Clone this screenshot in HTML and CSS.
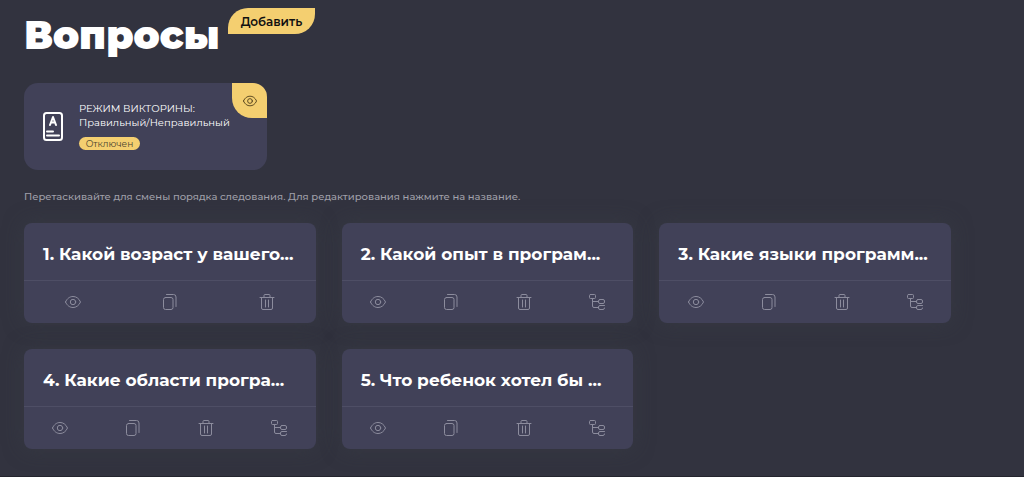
FILE: index.html
```html
<!DOCTYPE html>
<html lang="ru">
<head>
    <meta charset="UTF-8">
    <meta name="viewport" content="width=device-width, initial-scale=1.0">
    <title>Вопросы</title>
    <link rel="stylesheet" href="styles.css">
</head>
<body>
    <svg class="sprite" aria-hidden="true">
        <symbol id="eye" viewBox="0 0 16 16">
            <path d="M.5 8C2.2 4.200 4.900 2.500 8 2.500s5.800 1.700 7.500 5.500c-1.700 3.800-4.400 5.500-7.500 5.500S2.200 11.800.5 8z"/>
            <circle cx="8" cy="8" r="2.700"/>
        </symbol>
        <symbol id="copy" viewBox="0 0 16 16">
            <rect x="1.500" y="3.500" width="9.500" height="12" rx="2"/>
            <path d="M4.500.5h7a2.500 2.500 0 0 1 2.500 2.500v9.500"/>
        </symbol>
        <symbol id="trash" viewBox="0 0 16 16">
            <path d="M1 3.500h14M5 3.500v-2a1 1 0 0 1 1-1h4a1 1 0 0 1 1 1v2M2.500 3.500v10.500a1.500 1.500 0 0 0 1.500 1.500h8a1.500 1.500 0 0 0 1.500-1.500V3.500M6.500 6v7M9.500 6v7"/>
        </symbol>
        <symbol id="tree" viewBox="0 0 16 16">
            <rect x=".5" y=".5" width="6" height="4" rx="1"/>
            <rect x="9.500" y="5.500" width="6" height="4" rx="1.500"/>
            <path d="M3.500 4.500v7.500a1.500 1.500 0 0 0 1.500 1.500h4.500M3.500 7.500h6M15.500 11.500h-4.500a1.500 1.500 0 0 0-1.500 1.500v1a1.500 1.500 0 0 0 1.500 1.500h3a1.500 1.500 0 0 0 1.500-1.500"/>
        </symbol>
    </svg>

    <main class="page">
        <header class="header">
            <h1>Вопросы</h1>
            <button class="add" type="button">Добавить</button>
        </header>

        <section class="mode">
            <svg class="mode-icon" viewBox="0 0 20 29" aria-hidden="true">
                <rect x="1" y="1" width="18" height="27" rx="2.500"/>
                <path d="M7 13l3-8 3 8M8 10.500h4M4 19.500h6M4 23.500h12"/>
            </svg>
            <div class="mode-text">
                <p>РЕЖИМ ВИКТОРИНЫ:<br>Правильный/Неправильный</p>
                <span class="status">Отключен</span>
            </div>
            <button class="mode-toggle" type="button" aria-label="Включить режим"><svg><use href="#eye"/></svg></button>
        </section>

        <p class="hint">Перетаскивайте для смены порядка следования. Для редактирования нажмите на название.</p>

        <div class="questions">
            <article class="card">
                <h2><a href="#q1">1. Какой возраст у вашего...</a></h2>
                <div class="actions">
                    <button type="button" aria-label="Показать"><svg><use href="#eye"/></svg></button>
                    <button type="button" aria-label="Копировать"><svg><use href="#copy"/></svg></button>
                    <button type="button" aria-label="Удалить"><svg><use href="#trash"/></svg></button>
                </div>
            </article>
            <article class="card">
                <h2><a href="#q2">2. Какой опыт в програм...</a></h2>
                <div class="actions">
                    <button type="button" aria-label="Показать"><svg><use href="#eye"/></svg></button>
                    <button type="button" aria-label="Копировать"><svg><use href="#copy"/></svg></button>
                    <button type="button" aria-label="Удалить"><svg><use href="#trash"/></svg></button>
                    <button type="button" aria-label="Ветвление"><svg><use href="#tree"/></svg></button>
                </div>
            </article>
            <article class="card">
                <h2><a href="#q3">3. Какие языки программ...</a></h2>
                <div class="actions">
                    <button type="button" aria-label="Показать"><svg><use href="#eye"/></svg></button>
                    <button type="button" aria-label="Копировать"><svg><use href="#copy"/></svg></button>
                    <button type="button" aria-label="Удалить"><svg><use href="#trash"/></svg></button>
                    <button type="button" aria-label="Ветвление"><svg><use href="#tree"/></svg></button>
                </div>
            </article>
            <article class="card">
                <h2><a href="#q4">4. Какие области програ...</a></h2>
                <div class="actions">
                    <button type="button" aria-label="Показать"><svg><use href="#eye"/></svg></button>
                    <button type="button" aria-label="Копировать"><svg><use href="#copy"/></svg></button>
                    <button type="button" aria-label="Удалить"><svg><use href="#trash"/></svg></button>
                    <button type="button" aria-label="Ветвление"><svg><use href="#tree"/></svg></button>
                </div>
            </article>
            <article class="card">
                <h2><a href="#q5">5. Что ребенок хотел бы ...</a></h2>
                <div class="actions">
                    <button type="button" aria-label="Показать"><svg><use href="#eye"/></svg></button>
                    <button type="button" aria-label="Копировать"><svg><use href="#copy"/></svg></button>
                    <button type="button" aria-label="Удалить"><svg><use href="#trash"/></svg></button>
                    <button type="button" aria-label="Ветвление"><svg><use href="#tree"/></svg></button>
                </div>
            </article>
        </div>
    </main>
</body>
</html>
```
FILE: styles.css
```css
* {
    box-sizing: border-box;
}
body {
    margin: 0;
    background-color: #32333f;
    color: #fff;
    font-family: Montserrat, Inter, sans-serif;
}
h1, h2, p {
    margin: 0;
}
button {
    padding: 0;
    border: none;
    background: none;
    font-family: inherit;
    cursor: pointer;
}
svg {
    display: block;
    width: 16px;
    height: 16px;
    fill: none;
    stroke: currentColor;
    stroke-linecap: round;
    stroke-linejoin: round;
}
.sprite {
    display: none;
}
.page {
    min-height: 100vh;
    padding: 8px 73px 26px 24px;
    border-bottom: 1px solid #24252e;
}
.header {
    display: flex;
    align-items: flex-start;
    gap: 8px;
    margin-bottom: 20px;
}
h1 {
    font-size: 39px;
    line-height: 55px;
    font-weight: 900;
}
.add {
    height: 26px;
    padding: 0 13px;
    border-radius: 20px 0 20px 0;
    background: #f4cf70;
    color: #111;
    font-size: 12px;
    font-weight: 600;
}
.mode {
    display: flex;
    align-items: center;
    position: relative;
    width: 243px;
    height: 87px;
    padding-left: 19px;
    gap: 16px;
    border-radius: 14px;
    background: #414158;
}
.mode-icon {
    width: 20px;
    height: 29px;
    stroke-width: 2;
}
.mode-text {
    padding-bottom: 2px;
    font-size: 10px;
    line-height: 14px;
}
.status {
    display: block;
    width: 61px;
    height: 13px;
    margin-top: 7px;
    border-radius: 7px;
    background: #f4cf70;
    color: #4b442f;
    font-size: 9px;
    line-height: 13px;
    text-align: center;
}
.mode-toggle {
    position: absolute;
    top: 0;
    right: 0;
    display: flex;
    align-items: center;
    justify-content: center;
    width: 35px;
    height: 35px;
    border-radius: 0 14px 0 20px;
    background: #f4cf70;
    color: #4b3c18;
}
.mode-toggle svg {
    width: 14px;
    height: 14px;
}
.hint {
    margin: 19px 0 18px;
    color: #a0a0aa;
    font-size: 10px;
    line-height: 16px;
    font-weight: 500;
}
.questions {
    display: grid;
    grid-template-columns: repeat(3, 1fr);
    gap: 26px;
}
.card {
    border-radius: 8px;
    background: #414158;
    box-shadow: 0 0 20px rgba(60, 63, 72, 0.5);
}
h2 {
    padding: 19px 19px 14px;
    border-bottom: 1px solid #4e4e65;
    font-size: 17px;
    line-height: 24px;
    font-weight: 700;
    white-space: nowrap;
}
h2 a {
    color: #fff;
    text-decoration: none;
}
.actions {
    display: flex;
    height: 42px;
}
.actions button {
    display: flex;
    flex: 1;
    align-items: center;
    justify-content: center;
    color: #8c8c9d;
}
```
